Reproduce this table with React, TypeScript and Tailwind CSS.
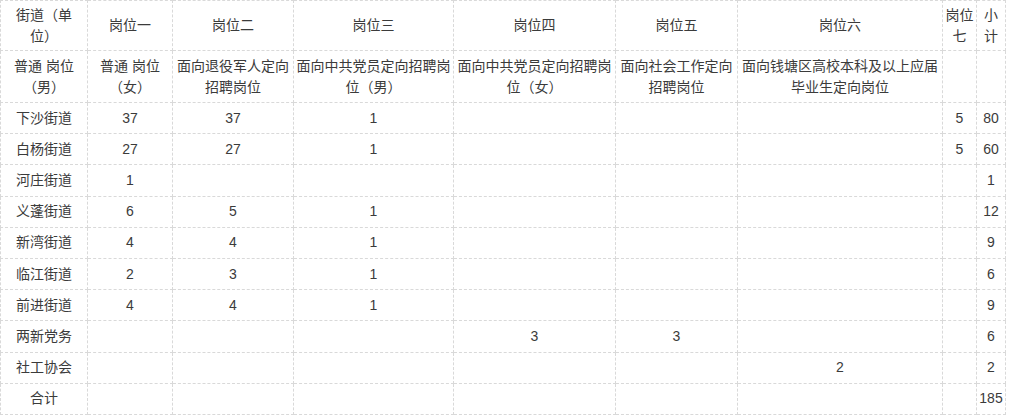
import React from 'react';

const colWidths = [87, 85, 121, 160, 162, 122, 205, 34, 29];

const headTop: React.ReactNode[] = [
  <>街道（单<br />位）</>,
  '岗位一',
  '岗位二',
  '岗位三',
  '岗位四',
  '岗位五',
  '岗位六',
  <>岗位<br />七</>,
  <>小<br />计</>,
];

const headSub: React.ReactNode[] = [
  <>普通 岗位<br />（男）</>,
  <>普通 岗位<br />（女）</>,
  <>面向退役军人定向<br />招聘岗位</>,
  <>面向中共党员定向招聘岗<br />位（男）</>,
  <>面向中共党员定向招聘岗<br />位（女）</>,
  <>面向社会工作定向<br />招聘岗位</>,
  <>面向钱塘区高校本科及以上应届<br />毕业生定向岗位</>,
  '',
  '',
];

const rows: string[][] = [
  ['下沙街道', '37', '37', '1', '', '', '', '5', '80'],
  ['白杨街道', '27', '27', '1', '', '', '', '5', '60'],
  ['河庄街道', '1', '', '', '', '', '', '', '1'],
  ['义蓬街道', '6', '5', '1', '', '', '', '', '12'],
  ['新湾街道', '4', '4', '1', '', '', '', '', '9'],
  ['临江街道', '2', '3', '1', '', '', '', '', '6'],
  ['前进街道', '4', '4', '1', '', '', '', '', '9'],
  ['两新党务', '', '', '', '3', '3', '', '', '6'],
  ['社工协会', '', '', '', '', '', '2', '', '2'],
  ['合计', '', '', '', '', '', '', '', '185'],
];

const cell =
  'border border-dashed border-[#d9d9d9] text-center align-middle px-0.5 whitespace-nowrap';

export default function App() {
  return (
    <div className="bg-white w-[1009px] h-[418px] overflow-hidden text-[14px] leading-[21px] text-[#3b3b3b] font-['Liberation_Sans','Noto_Sans_CJK_SC',sans-serif]">
      <table className="border-collapse table-fixed w-[1005px]">
        <colgroup>
          {colWidths.map((w, i) => (
            <col key={i} style={{ width: w }} />
          ))}
        </colgroup>
        <thead>
          <tr className="h-[50px]">
            {headTop.map((h, i) => (
              <td key={i} className={cell}>{h}</td>
            ))}
          </tr>
          <tr className="h-[52px]">
            {headSub.map((h, i) => (
              <td key={i} className={cell}>{h}</td>
            ))}
          </tr>
        </thead>
        <tbody>
          {rows.map((r, i) => (
            <tr key={i} className="h-[31.2px]">
              {r.map((v, j) => (
                <td key={j} className={cell}>{v}</td>
              ))}
            </tr>
          ))}
        </tbody>
      </table>
    </div>
  );
}
